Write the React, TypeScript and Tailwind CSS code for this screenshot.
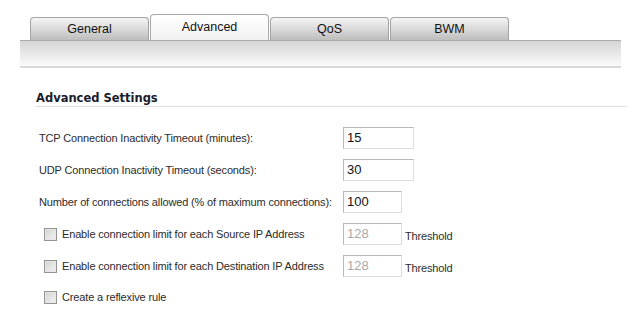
import React from "react";

const tabs = [
  { name: "General", active: false },
  { name: "Advanced", active: true },
  { name: "QoS", active: false },
  { name: "BWM", active: false },
];

const Checkbox = () => (
  <span className="inline-block w-[13px] h-[13px] border border-[#949494] bg-gradient-to-br from-[#d2d2d2] to-[#f4f4f4] shadow-[inset_0_0_0_1px_#e6e6e6]" />
);

const NumInput = ({ value, wide, disabled }: { value: string; wide?: boolean; disabled?: boolean }) => (
  <div
    className={`h-[22px] ${wide ? "w-[71px]" : "w-[59px]"} border border-[#b9b9b9] border-b-[#dedede] border-r-[#dedede] ${
      disabled ? "border-[#a9a9a9] text-[#a8a8a8]" : "text-[#111]"
    } bg-white pl-[3px] flex items-center text-[13px] tracking-normal font-['Liberation_Sans',Arial,sans-serif]`}
  >
    {value}
  </div>
);

const App = () => {
  return (
    <div className="w-[640px] h-[318px] bg-white overflow-hidden font-['Liberation_Sans',Arial,sans-serif] text-[#2a2a2a]">
      <div className="pt-[14px] pl-[20px]">
        <div className="flex items-end gap-[1px] pl-[10px] h-[26px]">
          {tabs.map((t) =>
            t.active ? (
              <div
                key={t.name}
                className="w-[119px] h-[26px] rounded-t-[4px] border border-b-0 border-[#a8a8a8] bg-gradient-to-b from-white to-[#f1f1f3] flex justify-center pt-[3px] text-[12.5px] text-[#111]"
              >
                {t.name}
              </div>
            ) : (
              <div
                key={t.name}
                className="w-[119px] h-[23px] rounded-t-[4px] border border-b-0 border-[#a3a3a3] bg-gradient-to-b from-[#f4f4f4] via-[#dadada] to-[#bdbdbd] flex justify-center pt-[2px] text-[12.5px] text-[#111]"
              >
                {t.name}
              </div>
            )
          )}
        </div>
        <div className="w-[601px] h-[28px] border-t border-[#acacac] border-b-2 border-b-[#d9d9d9] bg-gradient-to-b from-[#d5d5d5] to-[#fbfbfb]" />
      </div>

      <div className="ml-[35px] mr-[13px] mt-[23px] border-b border-[#e2e2e2] pb-[1px]">
        <div className="pl-[1px] font-['DejaVu_Sans',Verdana,sans-serif] font-bold text-[11.5px] leading-[14px] text-[#1b1b2b]">
          Advanced Settings
        </div>
      </div>

      <div className="mt-[15px] text-[11px] tracking-[-0.15px] text-[#2b2b2b]">
        <div className="flex items-center h-[32px]">
          <div className="w-[343px] pl-[39px]">TCP Connection Inactivity Timeout (minutes):</div>
          <NumInput value="15" wide />
        </div>
        <div className="flex items-center h-[32px]">
          <div className="w-[343px] pl-[39px]">UDP Connection Inactivity Timeout (seconds):</div>
          <NumInput value="30" wide />
        </div>
        <div className="flex items-center h-[32px]">
          <div className="w-[343px] pl-[39px]">Number of connections allowed (% of maximum connections):</div>
          <NumInput value="100" />
        </div>
        <div className="flex items-center h-[32px]">
          <div className="w-[343px] pl-[44px] flex items-center gap-[5px]">
            <Checkbox />
            <span>Enable connection limit for each Source IP Address</span>
          </div>
          <NumInput value="128" disabled />
          <span className="ml-[3px] mt-[4px]">Threshold</span>
        </div>
        <div className="flex items-center h-[32px]">
          <div className="w-[343px] pl-[44px] flex items-center gap-[5px]">
            <Checkbox />
            <span>Enable connection limit for each Destination IP Address</span>
          </div>
          <NumInput value="128" disabled />
          <span className="ml-[3px] mt-[4px]">Threshold</span>
        </div>
        <div className="flex items-center h-[31px]">
          <div className="w-[343px] pl-[44px] flex items-center gap-[5px]">
            <Checkbox />
            <span>Create a reflexive rule</span>
          </div>
        </div>
      </div>
    </div>
  );
};

export default App;
